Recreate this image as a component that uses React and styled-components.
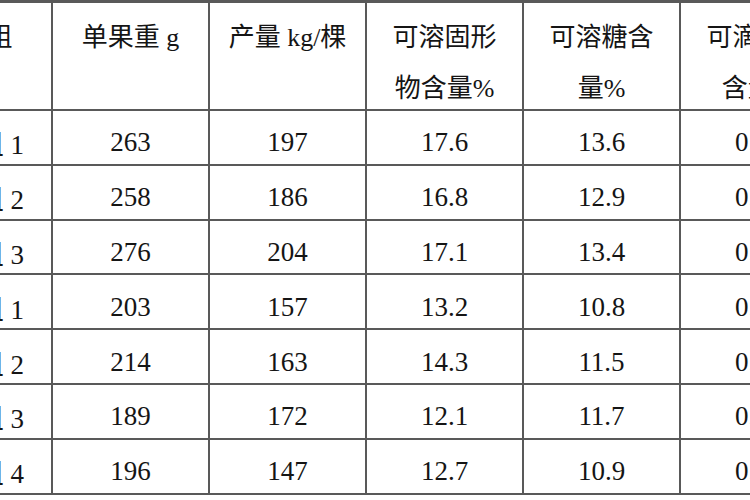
import React from "react";
import styled, { createGlobalStyle } from "styled-components";

const GlobalStyle = createGlobalStyle`
  html, body {
    margin: 0;
    padding: 0;
    background: #fff;
    overflow: hidden;
  }
`;

const headers = [
  ["处理组"],
  ["单果重 g"],
  ["产量 kg/棵"],
  ["可溶固形", "物含量%"],
  ["可溶糖含", "量%"],
  ["可滴定酸", "含量%"],
];

const rows = [
  ["处理组 1", "263", "197", "17.6", "13.6", "0.52"],
  ["处理组 2", "258", "186", "16.8", "12.9", "0.55"],
  ["处理组 3", "276", "204", "17.1", "13.4", "0.50"],
  ["对照组 1", "203", "157", "13.2", "10.8", "0.61"],
  ["对照组 2", "214", "163", "14.3", "11.5", "0.58"],
  ["对照组 3", "189", "172", "12.1", "11.7", "0.63"],
  ["对照组 4", "196", "147", "12.7", "10.9", "0.60"],
];

const App = () => {
  return (
    <Page>
      <GlobalStyle />
      <Table>
        {headers.map((lines, i) => (
          <HeadCell key={"h" + i}>
            {lines.map((line, j) => (
              <span key={j}>{line}</span>
            ))}
          </HeadCell>
        ))}
        {rows.map((row, r) =>
          row.map((value, c) => <Cell key={r + "-" + c}>{value}</Cell>)
        )}
      </Table>
    </Page>
  );
};
export default App;

const Page = styled.div`
  width: 750px;
  height: 500px;
  overflow: hidden;
  background: #fff;
`;

const Table = styled.div`
  display: grid;
  grid-template-columns: repeat(6, 155px);
  grid-template-rows: 106px repeat(7, 52.8px);
  gap: 2px;
  padding: 3px 0 2px 0;
  margin-left: -104px;
  width: max-content;
  background: #595959;
  font-family: "Liberation Serif", "Noto Sans CJK SC", serif;
  font-size: 27px;
  color: #151515;
`;

const HeadCell = styled.div`
  background: #fff;
  display: flex;
  flex-direction: column;
  align-items: center;
  padding-top: 9px;
  line-height: 51px;
  font-size: 26px;
  white-space: nowrap;
`;

const Cell = styled.div`
  background: #fff;
  display: flex;
  align-items: center;
  justify-content: center;
  padding-top: 11px;
  box-sizing: border-box;
  white-space: nowrap;
`;
